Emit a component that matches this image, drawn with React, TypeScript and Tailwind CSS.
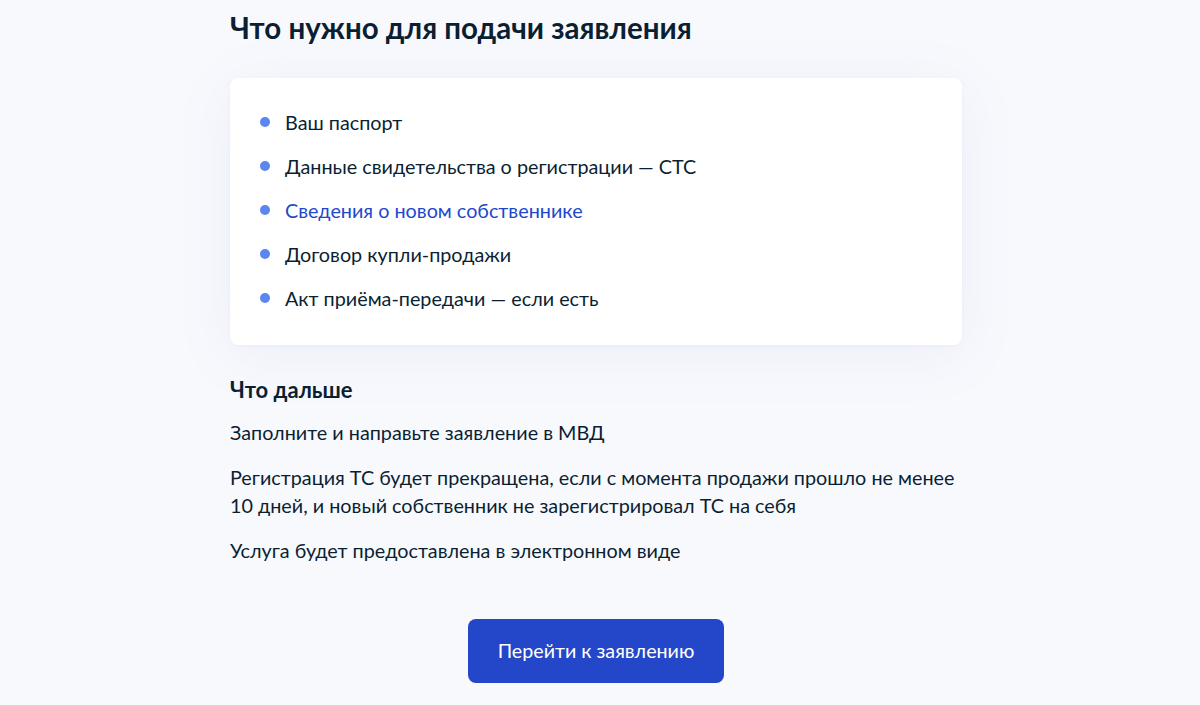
import React from 'react';

const documents = [
  { text: 'Ваш паспорт' },
  { text: 'Данные свидетельства о регистрации — СТС' },
  { text: 'Сведения о новом собственнике', link: true },
  { text: 'Договор купли-продажи' },
  { text: 'Акт приёма-передачи — если есть' },
];

const App: React.FC = () => {
  return (
    <div className="min-h-[705px] bg-[#f8f9fd] font-['Lato','Noto_Sans',sans-serif] text-[#0b1f33]">
      <div className="ml-[230px] w-[732px] pt-[10px]">
        <h1 className="text-[29.5px] font-bold leading-[36px]">Что нужно для подачи заявления</h1>

        <div className="mt-[32px] rounded-lg bg-white px-[30px] pt-[30px] pb-[33px] shadow-[0_10px_60px_rgba(100,120,200,0.08),0_1px_4px_rgba(100,120,200,0.06)]">
          <ul className="flex flex-col gap-[16px]">
            {documents.map((d) => (
              <li key={d.text} className="flex items-center text-[19.8px] leading-[28px]">
                <span className="mr-[15px] h-[10px] w-[10px] rounded-full bg-[#5b85ef]" />
                <span className={d.link ? 'text-[#2148cc]' : ''}>{d.text}</span>
              </li>
            ))}
          </ul>
        </div>

        <h2 className="mt-[31px] text-[22px] font-bold leading-[28px]">Что дальше</h2>
        <div className="mt-[14px] flex flex-col gap-[17px] text-[19.8px] leading-[28px]">
          <p>Заполните и направьте заявление в МВД</p>
          <p>
            Регистрация ТС будет прекращена, если с момента продажи прошло не менее
            <br />
            10 дней, и новый собственник не зарегистрировал ТС на себя
          </p>
          <p>Услуга будет предоставлена в электронном виде</p>
        </div>

        <div className="mt-[55px] flex justify-center">
          <button className="h-[64px] w-[256px] rounded-lg bg-[#2447c9] text-[19.7px] text-white">
            Перейти к заявлению
          </button>
        </div>
      </div>
    </div>
  );
};

export default App;
